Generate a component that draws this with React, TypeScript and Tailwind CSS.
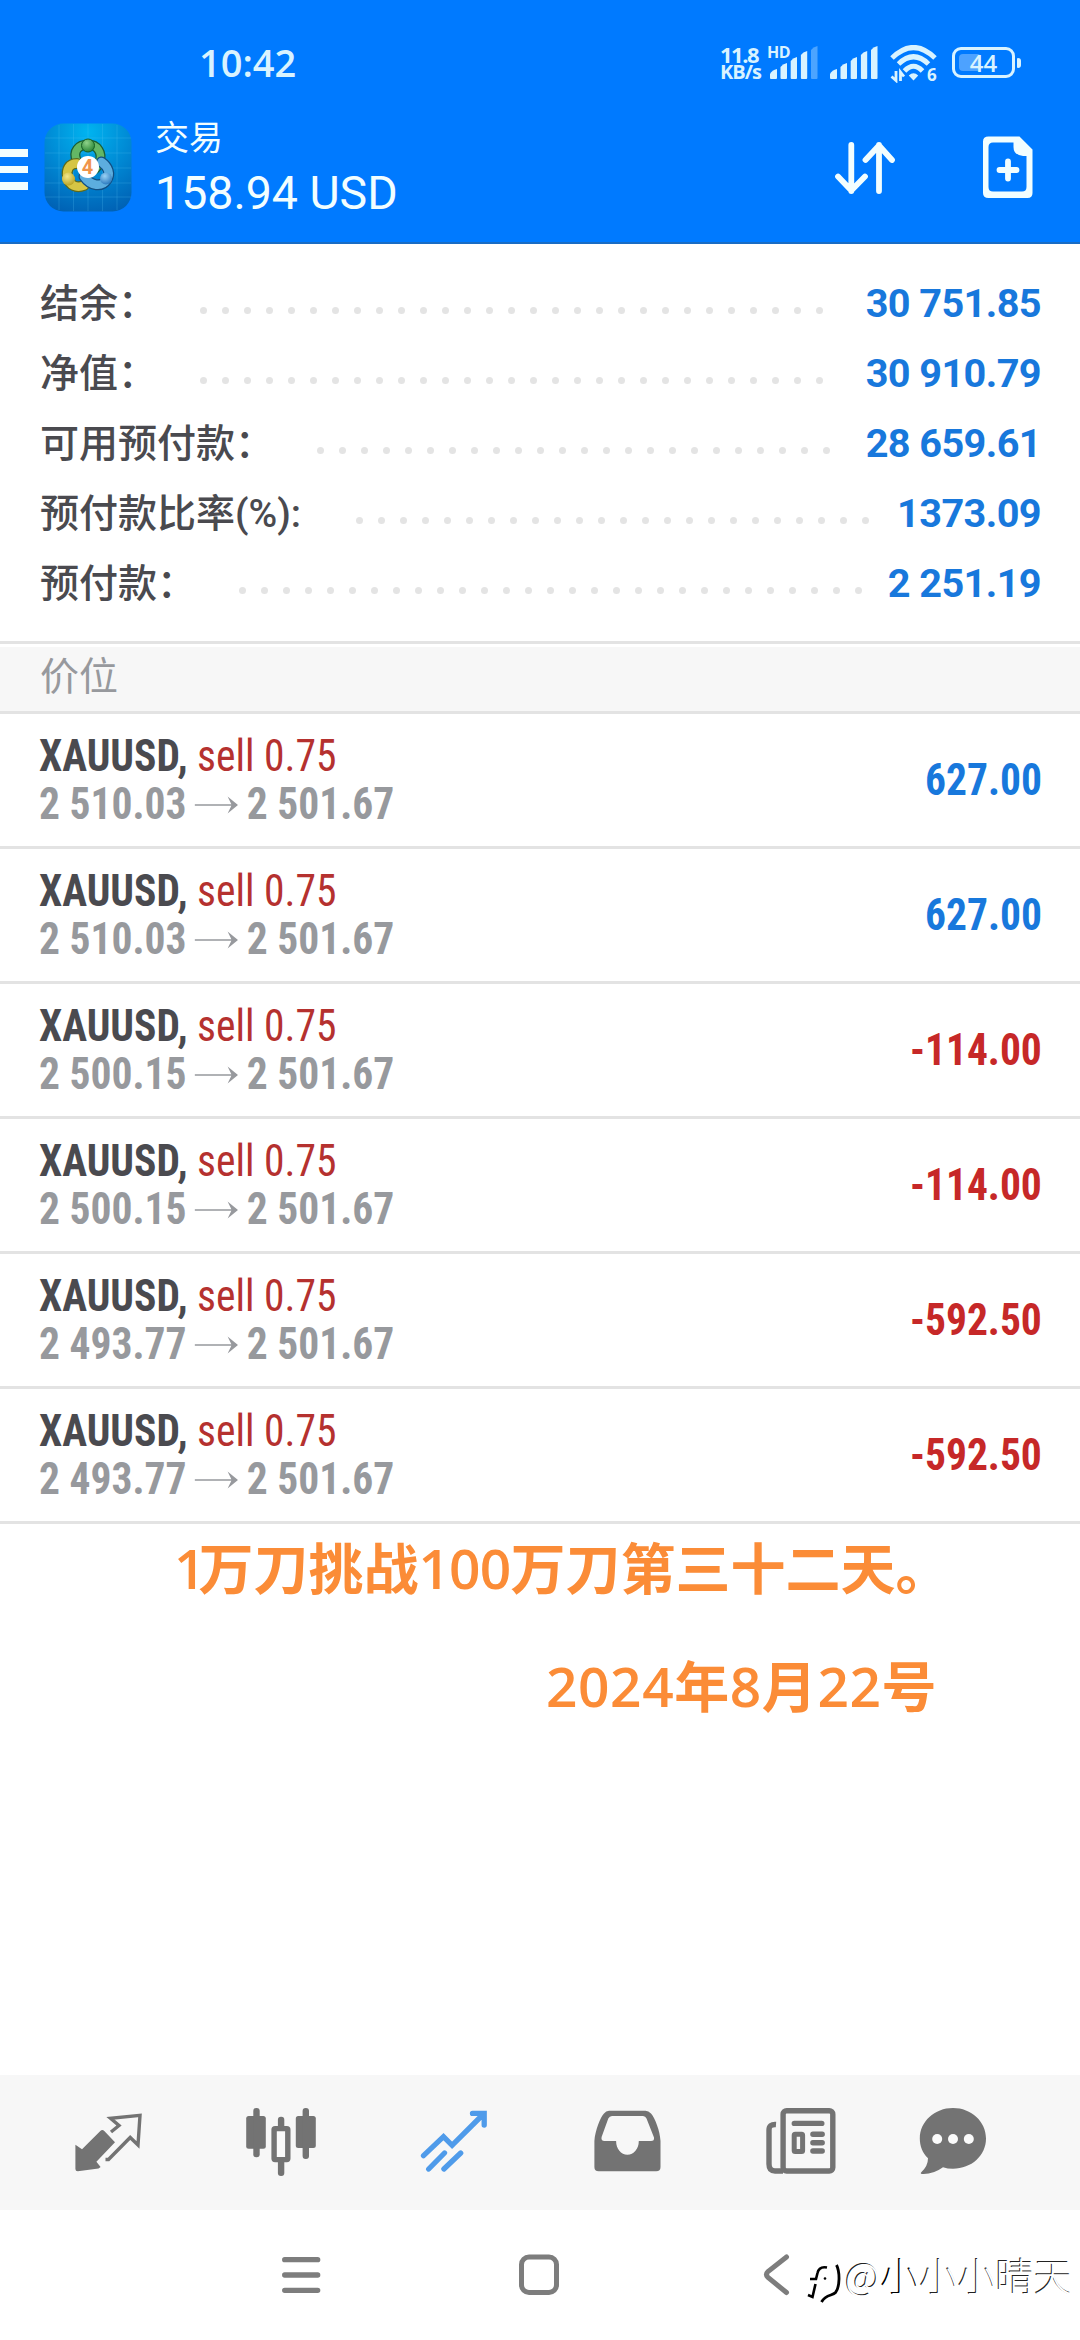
import { cva } from 'class-variance-authority'
import clsx from 'clsx'

import type { ReactNode } from 'react'

// ---------------------------------------------------------------------------
// Data
// ---------------------------------------------------------------------------

interface SummaryItem {
  label: string
  value: string
  dots: number
  /** Width of the label column, up to the first leader dot */
  labelClass: string
}

const summary: SummaryItem[] = [
  { label: '结余：', value: '30 751.85', dots: 29, labelClass: 'w-[160px]' },
  { label: '净值：', value: '30 910.79', dots: 29, labelClass: 'w-[160px]' },
  { label: '可用预付款：', value: '28 659.61', dots: 24, labelClass: 'w-[277px]' },
  { label: '预付款比率(%):', value: '1373.09', dots: 24, labelClass: 'w-[316px]' },
  { label: '预付款：', value: '2 251.19', dots: 29, labelClass: 'w-[199px]' },
]

interface Position {
  id: number
  open: string
  current: string
  profit: string
}

const positions: Position[] = [
  { id: 1, open: '2 510.03', current: '2 501.67', profit: '627.00' },
  { id: 2, open: '2 510.03', current: '2 501.67', profit: '627.00' },
  { id: 3, open: '2 500.15', current: '2 501.67', profit: '-114.00' },
  { id: 4, open: '2 500.15', current: '2 501.67', profit: '-114.00' },
  { id: 5, open: '2 493.77', current: '2 501.67', profit: '-592.50' },
  { id: 6, open: '2 493.77', current: '2 501.67', profit: '-592.50' },
]

// ---------------------------------------------------------------------------
// Status bar
// ---------------------------------------------------------------------------

function SignalBars({ level }: { level: number }) {
  const bars = [
    'M0 31v-4q2-4 7-5v9q0 1-1 1H1q-1 0-1-1Z',
    'M10.5 31V20q2-3 6.5-4v15q0 1-1 1h-4.500q-1 0-1-1Z',
    'M20.700 31V14q2-3 6.300-4v21q0 1-1 1h-4.300q-1 0-1-1Z',
    'M30.900 31V8q2-3 6.300-4v27q0 1-1 1h-4.300q-1 0-1-1Z',
    'M41 31V3q2-3 6.500-4v32q0 1-1 1h-4.500q-1 0-1-1Z',
  ]
  return (
    <svg width="48" height="34" viewBox="0 -2 48 34" className="shrink-0 fill-[#d9f3ff]">
      {bars.map((d, i) => (
        <path key={d} d={d} className={clsx(i >= level && 'opacity-35')} />
      ))}
    </svg>
  )
}

function WifiIcon() {
  return (
    <div className="relative h-[38px] w-[48px]">
      <svg width="48" height="38" viewBox="0 0 48 38" fill="none" className="stroke-[#d9f3ff]">
        <path d="M2 13Q23.500-8 45 13" strokeWidth="5" />
        <path d="M8.500 19Q23.500 4.500 38.500 19" strokeWidth="5" />
        <path d="M14.500 26Q23.500 16.500 32.500 26" strokeWidth="5" />
        <path d="M23.500 35.500 18.800 30.500Q23.500 26 28.200 30.500Z" className="fill-[#d9f3ff]" stroke="none" />
        <path d="M6 26v9.500L1.500 31.500M10.500 36v-9l3.500 4.500" strokeWidth="2.800" />
      </svg>
      <span className="absolute top-[22px] left-[37px] text-[17px] leading-[16px] font-bold">6</span>
    </div>
  )
}

function BatteryIcon() {
  return (
    <div className="flex items-center gap-[2px]">
      <div className="relative flex h-[31px] w-[63px] items-center justify-center rounded-[9px] border-[3px] border-[#d9f3ff]">
        <span className="absolute top-[4px] left-[4px] h-[17px] w-[22px] rounded-[4px] bg-white/30" />
        <span className="relative text-[24px] leading-none font-semibold">44</span>
      </div>
      <span className="h-[10px] w-[4px] rounded-r-[3px] rounded-l-[1px] bg-[#d9f3ff]" />
    </div>
  )
}

function StatusBar() {
  return (
    <div className="flex h-[118px] items-start pt-[45px] pl-[199px] font-['Open_Sans',sans-serif] text-[#d9f3ff]">
      <span className="w-[521px] text-[38px] leading-[34px] font-semibold">10:42</span>
      <div className="flex w-[48px] flex-col font-bold whitespace-nowrap">
        <span className="h-[18px] text-[22px] leading-[18px] tracking-[-1.5px]">11.8</span>
        <span className="h-[18px] text-[20px] leading-[18px] tracking-[-1px]">KB/s</span>
      </div>
      <div className="relative w-[62px] pl-[2px]">
        <SignalBars level={4} />
        <span className="absolute top-0 left-[-1px] text-[16px] leading-[14px] font-bold tracking-[-0.5px]">HD</span>
      </div>
      <div className="w-[60px]">
        <SignalBars level={5} />
      </div>
      <div className="w-[62px]">
        <WifiIcon />
      </div>
      <div className="pt-[2px]">
        <BatteryIcon />
      </div>
    </div>
  )
}

// ---------------------------------------------------------------------------
// Header
// ---------------------------------------------------------------------------

function AppLogo() {
  return (
    <svg width="88" height="89" viewBox="0 0 88 89" className="shrink-0">
      <defs>
        <radialGradient id="logo-bg" cx="0.5" cy="0.1" r="0.95">
          <stop offset="0" stopColor="#00b4f0" />
          <stop offset="0.55" stopColor="#0086d2" />
          <stop offset="1" stopColor="#0061b4" />
        </radialGradient>
        <radialGradient id="logo-green" cx="0.4" cy="0.3" r="0.8">
          <stop offset="0" stopColor="#8fd28a" />
          <stop offset="1" stopColor="#1d7d2c" />
        </radialGradient>
        <radialGradient id="logo-yellow" cx="0.4" cy="0.3" r="0.8">
          <stop offset="0" stopColor="#f3e98c" />
          <stop offset="1" stopColor="#b39a17" />
        </radialGradient>
        <radialGradient id="logo-blue" cx="0.4" cy="0.3" r="0.8">
          <stop offset="0" stopColor="#9ad2f5" />
          <stop offset="1" stopColor="#1d6fb8" />
        </radialGradient>
      </defs>
      <rect x="0.500" y="0.500" width="87" height="88" rx="19" fill="url(#logo-bg)" />
      <path d="M15 2v85M29.500 1v87M44 1v87M58.500 1v87M73 2v85M1 15h86M1 30h86M1 45h86M1 60h86M1 74h86" stroke="#5cc8f5" strokeOpacity="0.22" />
      <g fill="none" strokeLinecap="round">
        <path d="M33 38C28 28 35 21.500 44 21.500s15 8 11.500 18c-1 3-3 5-5 7" stroke="#1b5e34" strokeWidth="10" />
        <path d="M33 38C28 28 35 21.500 44 21.500s15 8 11.500 18c-1 3-3 5-5 7" stroke="#63b765" strokeWidth="7.500" />
        <path d="M33 40.500c-8 0-11 6-9.500 14 2 8 9 11 16.500 8" stroke="#5d6a1c" strokeWidth="11" />
        <path d="M33 40.500c-8 0-11 6-9.500 14 2 8 9 11 16.500 8" stroke="#d5c545" strokeWidth="8.500" />
        <path d="M57.500 39c7 5 9 12 5.500 17.500-5 8-16 7-23-3" stroke="#114e82" strokeWidth="11" />
        <path d="M57.500 39c7 5 9 12 5.500 17.500-5 8-16 7-23-3" stroke="#5cadde" strokeWidth="8.500" />
      </g>
      <circle cx="44" cy="22.500" r="6.500" fill="url(#logo-green)" stroke="#175f26" />
      <circle cx="24.500" cy="56" r="6.500" fill="url(#logo-yellow)" />
      <circle cx="62" cy="55.500" r="6" fill="url(#logo-blue)" />
      <circle cx="44" cy="44" r="11" fill="#fff" />
      <text x="43.500" y="51" textAnchor="middle" className="fill-[#f0944a] font-['Roboto',sans-serif] text-[20px] font-bold">
        4
      </text>
    </svg>
  )
}

function Header() {
  return (
    <header className="h-[244px] shrink-0 border-b-2 border-[#1a6cc4] bg-[#007aff] text-[#f2feff]">
      <StatusBar />
      <div className="flex items-start">
        <div className="mt-[31px] flex w-[28px] flex-col gap-[9px]">
          <span className="h-[7.500px] bg-current" />
          <span className="h-[7.500px] bg-current" />
          <span className="h-[7.500px] bg-current" />
        </div>
        <div className="mt-[5px] ml-[16px]">
          <AppLogo />
        </div>
        <div className="ml-[23px] w-[679px]">
          <div className="h-[40px] font-['Noto_Sans_CJK_SC',sans-serif] text-[34px] leading-[35px]">交易</div>
          <div className="h-[60px] font-['Roboto',sans-serif] text-[46.500px] leading-[70px]">158.94 USD</div>
        </div>
        <svg width="62" height="54" viewBox="0 0 62 54" fill="none" stroke="currentColor" strokeWidth="5.800" strokeLinecap="round" strokeLinejoin="round" className="mt-[22px]">
          <path d="M17.300 5v46M4 36.500 17.300 50.500 31 36.500M45 51V5M31.500 20 45 5.500 58 20" />
        </svg>
        <svg width="52" height="63" viewBox="0 0 52 63" fill="none" className="mt-[18px] ml-[86px]">
          <path
            d="M6.500 0.500H37.500L50.500 13.500V57q0 5-5 5h-39q-5.500 0-5.500-5V5.500Q1 0.500 6.500 0.500ZM11 6.500Q6.500 6.500 6.500 11V51q0 4.500 4.500 4.500H40q4.500 0 4.500-4.500V20H41Q31.500 19 31.500 11V6.500Z"
            fill="currentColor"
            fillRule="evenodd"
          />
          <path d="M26 25.500v17M17.500 34h17" stroke="currentColor" strokeWidth="5.800" strokeLinecap="round" />
        </svg>
      </div>
    </header>
  )
}

// ---------------------------------------------------------------------------
// Account summary
// ---------------------------------------------------------------------------

function SummaryRow({ label, value, dots, labelClass }: SummaryItem) {
  return (
    <div className="flex h-[70px] items-center pr-[39px] pl-[40px]">
      <span className={clsx('shrink-0 pt-[2px] font-["Roboto","Noto_Sans_CJK_SC",sans-serif] text-[39px] leading-[68px] font-medium whitespace-nowrap text-[#4a4a4f]', labelClass)}>
        {label}
      </span>
      <span className="flex gap-[15px] pt-[15px]" aria-hidden="true">
        {Array.from({ length: dots }, (_, i) => (
          <span key={i} className="size-[7px] rounded-full bg-[#e4e4e4]" />
        ))}
      </span>
      <span className="ml-auto pt-[2px] font-['Roboto',sans-serif] text-[39.700px] leading-[68px] font-bold tracking-[-0.6px] whitespace-nowrap text-[#1878dc]">
        {value}
      </span>
    </div>
  )
}

// ---------------------------------------------------------------------------
// Positions
// ---------------------------------------------------------------------------

const profitVariants = cva('ml-auto origin-right scale-x-[0.943] text-[44px] leading-none font-bold', {
  variants: {
    sign: {
      gain: 'text-[#1878dc]',
      loss: 'text-[#c62828]',
    },
  },
})

function PositionRow({ open, current, profit }: Omit<Position, 'id'>) {
  return (
    <div className="flex h-[135px] items-center border-b-3 border-[#e3e3e3] pr-[38px] pl-[39px] font-['Roboto',sans-serif] whitespace-nowrap font-stretch-condensed">
      <div className="flex origin-left scale-x-[0.943] flex-col">
        <div className="text-[44px] leading-[48px]">
          <span className="font-bold text-[#4a4a4f]">XAUUSD,</span> <span className="text-[#b5312f]">sell 0.75</span>
        </div>
        <div className="flex items-center text-[44px] leading-[48px] font-bold text-[#97999d]">
          {open}
          <svg width="46" height="18" viewBox="0 0 46 18" className="mr-[9px] ml-[9px] mt-[1px]" fill="currentColor">
            <path d="M0 8.300H39L35 0.500 46 9 35 17.500 39 9.700H0Z" />
          </svg>
          {current}
        </div>
      </div>
      <span className={profitVariants({ sign: profit.startsWith('-') ? 'loss' : 'gain' })}>{profit}</span>
    </div>
  )
}

// ---------------------------------------------------------------------------
// Tab bar
// ---------------------------------------------------------------------------

function TabIcon({ className, children }: { className?: string; children: ReactNode }) {
  return (
    <svg width="80" height="80" viewBox="0 0 80 80" fill="none" className={clsx('shrink-0', className)}>
      {children}
    </svg>
  )
}

function TabBar() {
  return (
    <nav className="flex h-[135px] shrink-0 items-center gap-[93px] bg-[#f7f7f7] pl-[68px] text-[#737373]">
      <TabIcon>
        <path d="M7.400 41.700 14 46.300 32.300 28Q34.300 26 36.300 28L47 39.300 28.400 58.700 32.600 64 30.500 65.500 9.800 68.300Q7.400 68.300 7.400 66Z" fill="currentColor" />
        <path d="m43 29 8-6.500-8.500-7.300L72 12.300 70 42l-7.800-7.500L40.500 56.500H37.500" stroke="currentColor" strokeWidth="3.400" />
      </TabIcon>
      <TabIcon>
        <g fill="currentColor">
          <rect x="5.200" y="13" width="19.600" height="32.700" rx="2.500" />
          <rect x="12.300" y="5" width="6.400" height="49.300" rx="3" />
          <rect x="54.800" y="13" width="20" height="32" rx="2.500" />
          <rect x="61.600" y="5" width="6.400" height="51" rx="3" />
          <rect x="36.900" y="13.700" width="6.400" height="14" rx="3" />
          <rect x="36.900" y="55" width="6.400" height="18" rx="3" />
        </g>
        <rect x="33.100" y="25.600" width="13.700" height="31" rx="1" fill="#f9f9f9" stroke="currentColor" strokeWidth="5.400" />
      </TabIcon>
      <TabIcon className="text-[#4f9bea]">
        <path
          d="M9.500 52.700 29.500 33.700 38.100 42.300 69 11.500M58.500 10.400H70.200V22M14.700 66 30.500 50M29.900 66 46.700 50"
          stroke="currentColor"
          strokeWidth="5.300"
          strokeLinecap="round"
        />
      </TabIcon>
      <TabIcon>
        <path
          d="M7.400 38C8 28 13.500 14 17 10.500Q19 7.700 22 7.700H58.500Q61.500 7.700 64 10.500C68 15 73 28 73.500 38V64q0 4.300-4.300 4.300H11.700q-4.300 0-4.300-4.300ZM25 13Q22.500 13 21.300 15.500L14.600 34Q13.800 38 17.500 38H29.100C29.100 46 34 51.700 40.400 51.700S51.800 46 51.800 38H64Q67.500 38 67 34.500L59.500 15.500Q58.500 13 56 13Z"
          fill="currentColor"
          fillRule="evenodd"
        />
      </TabIcon>
      <TabIcon>
        <rect x="23.100" y="7.700" width="49.700" height="60.300" rx="3.500" stroke="currentColor" strokeWidth="5.400" />
        <path d="M23 68H15Q9 68 9 61V27Q9 21 16 21.500" stroke="currentColor" strokeWidth="5.400" />
        <path d="M34.300 20.400H61.800M52.900 31.300H62.200M52.900 39.700H62.200M52.900 48H62.200" stroke="currentColor" strokeWidth="5.400" strokeLinecap="round" />
        <rect x="34.200" y="31.200" width="8.400" height="17.400" rx="1" stroke="currentColor" strokeWidth="5" />
      </TabIcon>
      <TabIcon className="-ml-[20px]">
        <path d="M40 5C58.500 5 73 18.500 73 35.500S58.500 65.700 40 65.700Q34.500 65.700 30 64.200 20 71.500 9 70.900 6.800 70.500 8.500 69 15 63 15 55.300C9.500 50 6.800 43 6.800 35.500 6.800 18.500 21.500 5 40 5Z" fill="currentColor" />
        <g fill="#fbfbfb">
          <circle cx="24.200" cy="36" r="5" />
          <circle cx="40" cy="36" r="5" />
          <circle cx="55.800" cy="36" r="5" />
        </g>
      </TabIcon>
    </nav>
  )
}

// ---------------------------------------------------------------------------
// System navigation
// ---------------------------------------------------------------------------

function SystemNav() {
  return (
    <div className="flex h-[130px] shrink-0 items-start pt-[42px] text-[#7d7d7d]">
      <svg width="44" height="46" viewBox="0 0 44 46" fill="none" stroke="currentColor" strokeWidth="5.300" strokeLinecap="round" className="ml-[279px]">
        <path d="M5.700 7.700H38.700M5.700 23H38.700M5.700 38.300H38.700" />
      </svg>
      <svg width="44" height="46" viewBox="0 0 44 46" fill="none" stroke="currentColor" strokeWidth="5" className="ml-[194px]">
        <rect x="4.500" y="5" width="35" height="35.500" rx="7.500" />
      </svg>
      <svg width="30" height="46" viewBox="0 0 30 46" fill="none" stroke="currentColor" strokeWidth="5" strokeLinecap="round" className="ml-[200px]">
        <path d="M25.500 5 7 19.500Q4 22.500 7 25.500L25.500 40.500" />
      </svg>
      <div className="mt-[4px] ml-[16px] flex items-start">
        <svg width="36" height="48" viewBox="0 0 36 48" fill="none" stroke="#000" className="shrink-0">
          <path d="M20 11.500Q12 10 10.500 17L9 23H3M8.500 28 5.500 41 1 39" strokeWidth="2.600" />
          <path d="M29.500 9C33 16 33 31 28.500 36.500 25.500 40 19 38 14.500 46" strokeWidth="2.800" />
          <circle cx="18" cy="22.500" r="1.300" fill="#000" stroke="none" />
        </svg>
        <span className="ml-[2px] font-['Noto_Sans_CJK_SC',sans-serif] text-[38.200px] leading-[38px] font-light whitespace-nowrap text-white [text-shadow:-1px_-1px_0.500px_#222]">
          <span className="tracking-[1.5px]">@</span>
          <span className="[text-shadow:-1.5px_-1px_0_#000]">小</span>
          小小晴天
        </span>
      </div>
    </div>
  )
}

// ---------------------------------------------------------------------------
// Screen
// ---------------------------------------------------------------------------

export default function App() {
  return (
    <div className="flex h-[2340px] w-[1080px] flex-col overflow-hidden bg-white">
      <Header />
      <section className="h-[397px] shrink-0 pt-[24px]">
        {summary.map((item) => (
          <SummaryRow key={item.label} {...item} />
        ))}
      </section>
      <div className="h-[6px] shrink-0 border-t-3 border-[#e3e3e3]" />
      <div className="h-[67px] shrink-0 border-b-3 border-[#e3e3e3] bg-[#f7f7f7] pl-[40px] font-['Noto_Sans_CJK_SC',sans-serif] text-[39px] leading-[53px] text-[#97999d]">
        价位
      </div>
      <section className="shrink-0">
        {positions.map(({ id, ...position }) => (
          <PositionRow key={id} {...position} />
        ))}
      </section>
      <section className="flex flex-1 flex-col font-['Open_Sans','Noto_Sans_CJK_SC',sans-serif] text-[55px] font-semibold whitespace-nowrap text-[#fb8c37]">
        <p className="pt-[4px] pl-[174px] leading-[80px]">
          <span className="tracking-[-7px]">1</span>万刀挑战<span className="tracking-[-0.8px]">100</span>万刀第三十二天。
        </p>
        <p className="pt-[38px] pl-[546px] leading-[80px] tracking-[0.6px]">2024年8月22号</p>
      </section>
      <TabBar />
      <SystemNav />
    </div>
  )
}
